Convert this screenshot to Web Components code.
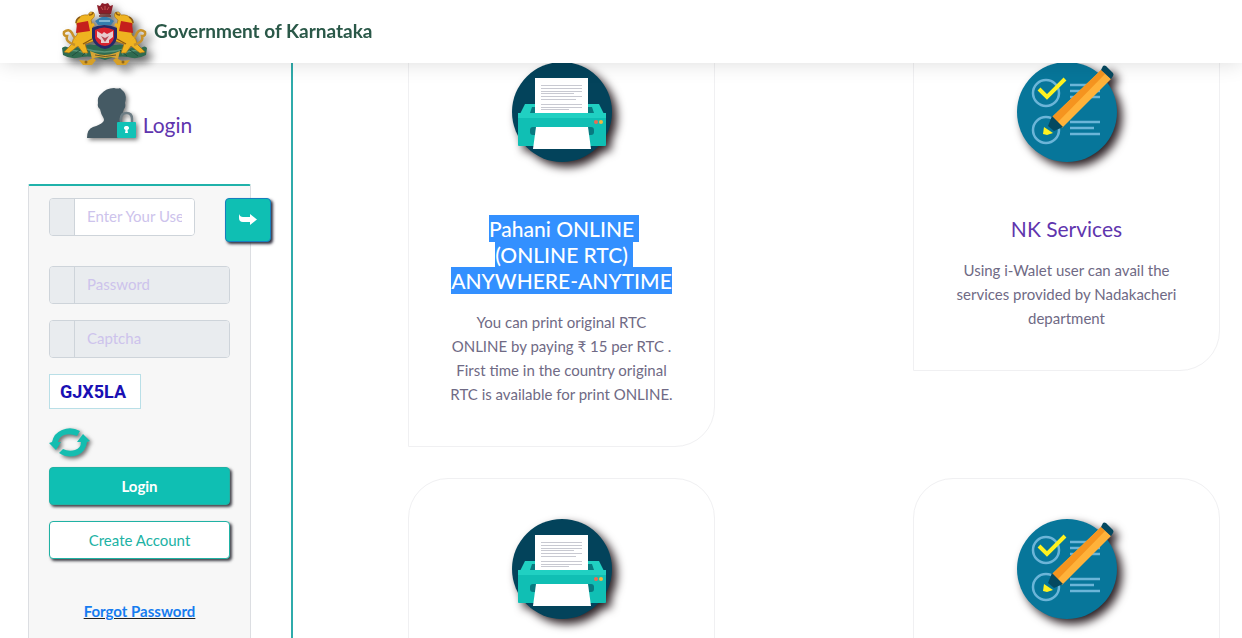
<!DOCTYPE html>
<html lang="en">
<head>
<meta charset="utf-8">
<title>Government of Karnataka</title>
<meta name="viewport" content="width=device-width, initial-scale=1">
<style>
html, body { margin: 0; height: 100%; background: #fff; }
body { font: 15px/24px Lato, "Open Sans", sans-serif; color: #6f6a85; overflow: hidden; }
</style>
</head>
<body>
<portal-app></portal-app>
<script>
const define = (name, html) => customElements.define(name, class extends HTMLElement {
  constructor() {
    super();
    const t = document.createElement('template');
    t.innerHTML = html;
    this.attachShadow({ mode: 'open' }).append(t.content.cloneNode(true));
  }
});

const beast = `
  <path d="M33 33L29 17q5-3 3-7-4-3-6 2q-7-1-10 4l-2 4 2 4-1 8q-5 4-5 9l-4 4-4 4 5 1 9-7 5 7 5 0-3-9 9-3z" fill="#efb320" stroke="#a06c10" stroke-width=".6"/>
  <path d="M13 42q-10-3-8-9q-4 0-3-4q5-4 8 1q2 5 5 6" fill="none" stroke="#c8922a" stroke-width="2.500"/>
  <path d="M15 20l11-2 2 10-14 2z" fill="#c51f1c"/>
  <path d="M14 20q0-4 4-6M30 36l-9 5M27 12q4 0 4-3" fill="none" stroke="#8c5a12" stroke-width="1.400"/>
  <path d="M28 24l4-3M13 35q6 3 12-2" stroke="#efb320" stroke-width="3" fill="none"/>`;

define('state-emblem', `
<style>
:host { display: block; width: 86px; height: 64px; filter: drop-shadow(5px 5px 4px rgba(40,40,40,.7)); }
svg { display: block; width: 100%; height: 100%; }
</style>
<svg viewBox="0 0 86 64" role="img" aria-label="State emblem">
  <path d="M0 45q3-3 7 0q7-3 12 1q6-6 13-4h22q7-2 13 4q6-4 12-1q4-3 6 0l-1 7q-9 5-18 2q-10-2-23 3q-14-5-23-3q-11 3-19-2z" fill="#2f6b50"/>
  <path d="M3 49q11-4 22 2M60 51q11-6 22-2M24 46q18 6 38 0" fill="none" stroke="#579377" stroke-width="1.500"/>
  <path d="M10 53l8-6M20 53l6-6M58 47l7 6M68 47l8 6" stroke="#214f3c"/>
  <g>${beast}</g>
  <g transform="translate(85 0) scale(-1 1)">${beast}</g>
  <path d="M30 25q12-6 25 0v10q-2 9-12 11q-11-2-13-11z" fill="#252a68"/>
  <path d="M33 27q9-5 19 0v8q-2 7-9 8q-8-1-10-8z" fill="#d9232e"/>
  <path d="M35 28l5 3 2-2 3 2 6-3v6l-4 3v3h-8v-3l-4-3z" fill="#e8cccd"/>
  <path d="M39 33l4 2 4-2-4 6z" fill="#b94a52"/>
  <path d="M36 16q6-5 13 0l3 2-3 4H36l-3-4z" fill="#367eae"/>
  <path d="M37 18h11" stroke="#9cc9dc" stroke-width="1.500"/>
  <path d="M35 2l3 1 2-3 3 1 3-1 2 3 3-1-2 9H37z" fill="#8c1d29"/>
  <path d="M38 11h10M37 13h12" stroke="#6d2a28" stroke-width="1.400"/>
  <path d="M39 4l2 3M43 3v4M47 4l-2 3" stroke="#c75552"/>
  <path d="M28 48l5 2q9 4 20 0l5-2-2 8q-5-3-13-1q-8-2-13 1z" fill="#d8a534"/>
  <path d="M33 52q10 3 21 0" stroke="#65552b" fill="none"/>
  <path d="M31 55l-6 3-8-1 4 5h9l4-5M54 55l6 3 8-1-4 5h-9l-4-5" fill="#d8a026"/>
  <circle cx="24" cy="59" r="1.500" fill="#8c651d"/><circle cx="61" cy="59" r="1.500" fill="#8c651d"/>
</svg>`);

define('site-header', `
<style>
:host { position: fixed; inset: 0 0 auto; z-index: 5; display: block; }
header { display: flex; height: 63px; background: #fff; box-shadow: 0 0 20px rgba(0,0,0,.14); padding-left: 62px; gap: 6px; align-items: flex-start; }
state-emblem { margin-top: 3px; flex: none; }
h1 { margin: 0; font-size: 19px; line-height: 62px; font-weight: 700; color: #2a5848; white-space: nowrap; }
</style>
<header><state-emblem></state-emblem><h1>Government of Karnataka</h1></header>`);

define('user-icon', `
<style>:host { display: block; width: 51px; height: 54px; filter: drop-shadow(2px 2px 2px rgba(0,0,0,.5)); } svg { display: block; }</style>
<svg width="51" height="54" viewBox="0 0 51 54" aria-hidden="true">
  <path d="M0 52q0-9 6-11q7-2 10-5q2-2 0-5q-2-3-3-8q-3-2-2-6q-1-6 3-9q5-6 13-6q4 1 6 0q2 2 4 4q3 4 1 11q1 4-1 6q-1 5-4 8q-1 4 1 6l10 4v11z" fill="#455a64"/>
  <path d="M34 37v-4q0-6 5.500-6t5.500 6v4" fill="none" stroke="#6d7d85" stroke-width="2.500"/>
  <rect x="30" y="36" width="19" height="16" rx="1" fill="#12c2b6"/>
  <path d="M39.500 40a2 2 0 0 1 1 4l.5 3h-3l.5-3a2 2 0 0 1 1-4z" fill="#fff"/>
</svg>`);

define('refresh-icon', `
<style>:host { display: block; filter: drop-shadow(2px 2px 2px rgba(0,0,0,.6)); } svg { display: block; }</style>
<svg width="42" height="32" viewBox="0 0 42 32" aria-hidden="true">
  <g fill="#14bdb0">
    <path d="M0 16l3-1q2-9 10-12q9-4 18 1l-3 5q-7-3-13-1q-5 2-6 7h3l-5 8z"/>
    <path d="M41 14l-3 1q-1 9-9 13q-10 4-19-2l4-4q6 3 12 1q6-2 6-8h-4l6-8z"/>
  </g>
</svg>`);

define('input-group', `
<style>
:host { display: block; }
label { display: flex; height: 36px; border: 1px solid #ced4da; border-radius: 4px; overflow: hidden; }
.addon { flex: none; width: 24px; background: #e9ecef; border-right: 1px solid #ced4da; }
::slotted(input) { flex: 1; min-width: 0; border: 0; margin: 0; padding: 0 12px 2px; font: inherit; color: #495057; background: #fff; outline: 0; }
::slotted(input:disabled) { background: #e9ecef; }
</style>
<label><span class="addon"></span><slot></slot></label>`);

define('login-panel', `
<style>
:host { display: block; box-sizing: border-box; height: 100vh; border-right: 2px solid #2fabab; padding: 86px 40px 0 28px; overflow: hidden; }
.title { display: flex; align-items: flex-end; justify-content: center; gap: 5px; height: 54px; margin-bottom: 44px; }
h2 { margin: 0; font-size: 21px; line-height: 30px; font-weight: 400; color: #5f35ae; }
form { background: #f7f7f7; border: 1px solid #dcdee2; border-top: 2px solid #20b2aa; padding: 12px 20px 300px; border-radius: 2px; }
.user { display: flex; gap: 30px; margin: 0 -41px 24px 0; align-items: flex-start; }
.user input-group { flex: 1; min-width: 0; }
input::placeholder { color: #cdc3ec; opacity: 1; }
input-group { margin-bottom: 16px; }
.user input-group { margin: 0; }
button { font: inherit; padding: 0; cursor: pointer; box-sizing: border-box; border-radius: 4px; }
.go { flex: none; width: 46px; height: 44px; background: #0fbfb3; border: 1px solid #167fbd; box-shadow: 2px 2px 3px #303040; display: grid; place-items: center; }
.captcha { width: 80px; height: 33px; border: 1px solid #b9dfe7; background: #fff; padding-left: 10px; font: 700 18px/34px Roboto, "Liberation Sans", sans-serif; color: #1a10b4; margin-bottom: 18px; }
.refresh { display: block; background: none; border: 0; margin-bottom: 8px; }
.wide { display: block; width: 100%; height: 38px; box-shadow: 2px 2px 3px #404048; margin-bottom: 16px; border: 1px solid #20b2a4; background: #fff; color: #20b2a4; }
.primary { background: #0fbfb3; color: #fff; font-weight: 700; }
.forgot { display: block; text-align: center; padding-top: 24px; font-weight: 700; }
a { color: #167cf0; text-decoration: underline; text-decoration-color: #222; }
</style>
<div class="title"><user-icon></user-icon><h2>Login</h2></div>
<form>
  <div class="user">
    <input-group><input type="text" placeholder="Enter Your User Name" aria-label="User name"></input-group>
    <button class="go" type="button" aria-label="Continue"><svg width="18" height="12" viewBox="0 0 18 12"><path d="M0 0q1 3 4 3h7V0l7 5.500-7 5.500V8H4Q0 8 0 4z" fill="#fff"/></svg></button>
  </div>
  <input-group><input type="password" placeholder="Password" aria-label="Password" disabled></input-group>
  <input-group><input type="text" placeholder="Captcha" aria-label="Captcha" disabled></input-group>
  <div class="captcha">GJX5LA</div>
  <button class="refresh" type="button" aria-label="Refresh captcha"><refresh-icon></refresh-icon></button>
  <button class="wide primary" type="button">Login</button>
  <button class="wide" type="button">Create Account</button>
  <div class="forgot"><a href="#">Forgot Password</a></div>
</form>`);

define('printer-icon', `
<style>:host { display: block; filter: drop-shadow(5px 5px 5px #2b2024); } svg { display: block; }</style>
<svg width="100" height="100" viewBox="0 0 100 100" aria-hidden="true">
  <circle cx="50" cy="50" r="50" fill="#03435b"/>
  <path d="M13 42h74l7 14H6z" fill="#20d0c2"/>
  <path d="M20 45h60l2 6H18z" fill="#087a80"/>
  <path d="M6 52h88v31q0 1-1 1H7q-1 0-1-1z" fill="#10bfb4"/>
  <path d="M6 51h88v5H6z" fill="#20d0c2"/>
  <rect x="18" y="65" width="64" height="8" rx="3" fill="#087a80"/>
  <path d="M23 16h53v35H23z" fill="#fff"/>
  <path d="M29 23.500h41M29 26.500h41M29 29.500h41M29 31.500h33M29 34.500h41M29 37.500h35M29 42.500h41M29 45.500h41M29 47.500h28" stroke="#c8c9d1" stroke-width="1"/>
  <path d="M24 65h52l3 22H21z" fill="#fff"/>
  <circle cx="84" cy="60" r="2" fill="#f06952"/><circle cx="89" cy="60" r="2" fill="#f5b83d"/>
</svg>`);

define('checklist-icon', `
<style>:host { display: block; filter: drop-shadow(5px 5px 5px #2b2024); } svg { display: block; overflow: visible; }</style>
<svg width="100" height="100" viewBox="0 0 100 100" aria-hidden="true">
  <circle cx="50" cy="50" r="50" fill="#07769a"/>
  <g fill="none" stroke="#6bb5d8" stroke-width="2.500">
    <circle cx="29" cy="31" r="13"/><circle cx="29" cy="68" r="13"/>
    <path d="M53 23h30M53 29h30M53 35h30M53 60h30M53 66h24M53 72h30"/>
  </g>
  <path d="M22 27l8 8 18-18" fill="none" stroke="#fff21f" stroke-width="4"/>
  <path d="M26 72l1-7 9 6-6 2z" fill="#fff21f"/>
  <path d="M35 55l49-47 10 9-49 49z" fill="#ffb23a"/>
  <path d="M35 55l49-47 4 4-48 49z" fill="#f5941f"/>
  <path d="M84 8l2-4q1-1 3 0l7 7q1 2 0 3l-2 3z" fill="#054960"/>
  <path d="M35 54l11 11-9 4-6-5z" fill="#054960"/>
</svg>`);

define('service-card', `
<style>
:host { display: block; box-sizing: border-box; border: 1px solid #f0f0f2; border-radius: 40px 40px 40px 0; padding: 40px; text-align: center; background: #fff; }
.icon { display: flex; justify-content: center; height: 100px; margin-bottom: 54px; }
h3 { margin: 0 -10px 16px; font-size: 21px; line-height: 26px; font-weight: 400; color: #5f35ae; white-space: nowrap; }
p { margin: 0 -10px; white-space: nowrap; }
</style>
<div class="icon"><slot name="icon"></slot></div>
<h3><slot name="title"></slot></h3>
<p><slot></slot></p>`);

define('service-grid', `
<style>
:host { display: block; height: 100vh; overflow: hidden; }
main { display: grid; grid-template-columns: 1fr 1fr; gap: 31px 198px; align-items: start; padding: 21px 22px 40px 115px; }
mark { background: #3390ff; color: #fff; font-weight: 500; padding: 1px 5px 1px 0; margin-right: -5px; }
mark.last { padding-right: 0; margin: 0; }
</style>
<main>
  <service-card><printer-icon slot="icon"></printer-icon><span slot="title"><mark>Pahani ONLINE</mark><br><mark>(ONLINE RTC)</mark><br><mark class="last">ANYWHERE-ANYTIME</mark></span>You can print original RTC<br>ONLINE by paying ₹ 15 per RTC .<br>First time in the country original<br>RTC is available for print ONLINE.</service-card>
  <service-card><checklist-icon slot="icon"></checklist-icon><span slot="title">NK Services</span>Using i-Walet user can avail the<br>services provided by Nadakacheri<br>department</service-card>
  <service-card><printer-icon slot="icon"></printer-icon></service-card>
  <service-card><checklist-icon slot="icon"></checklist-icon></service-card>
</main>`);

define('portal-app', `
<style>
:host { display: grid; grid-template-columns: 293px 1fr; }
</style>
<site-header></site-header>
<login-panel></login-panel>
<service-grid></service-grid>`);
</script>
</body>
</html>
